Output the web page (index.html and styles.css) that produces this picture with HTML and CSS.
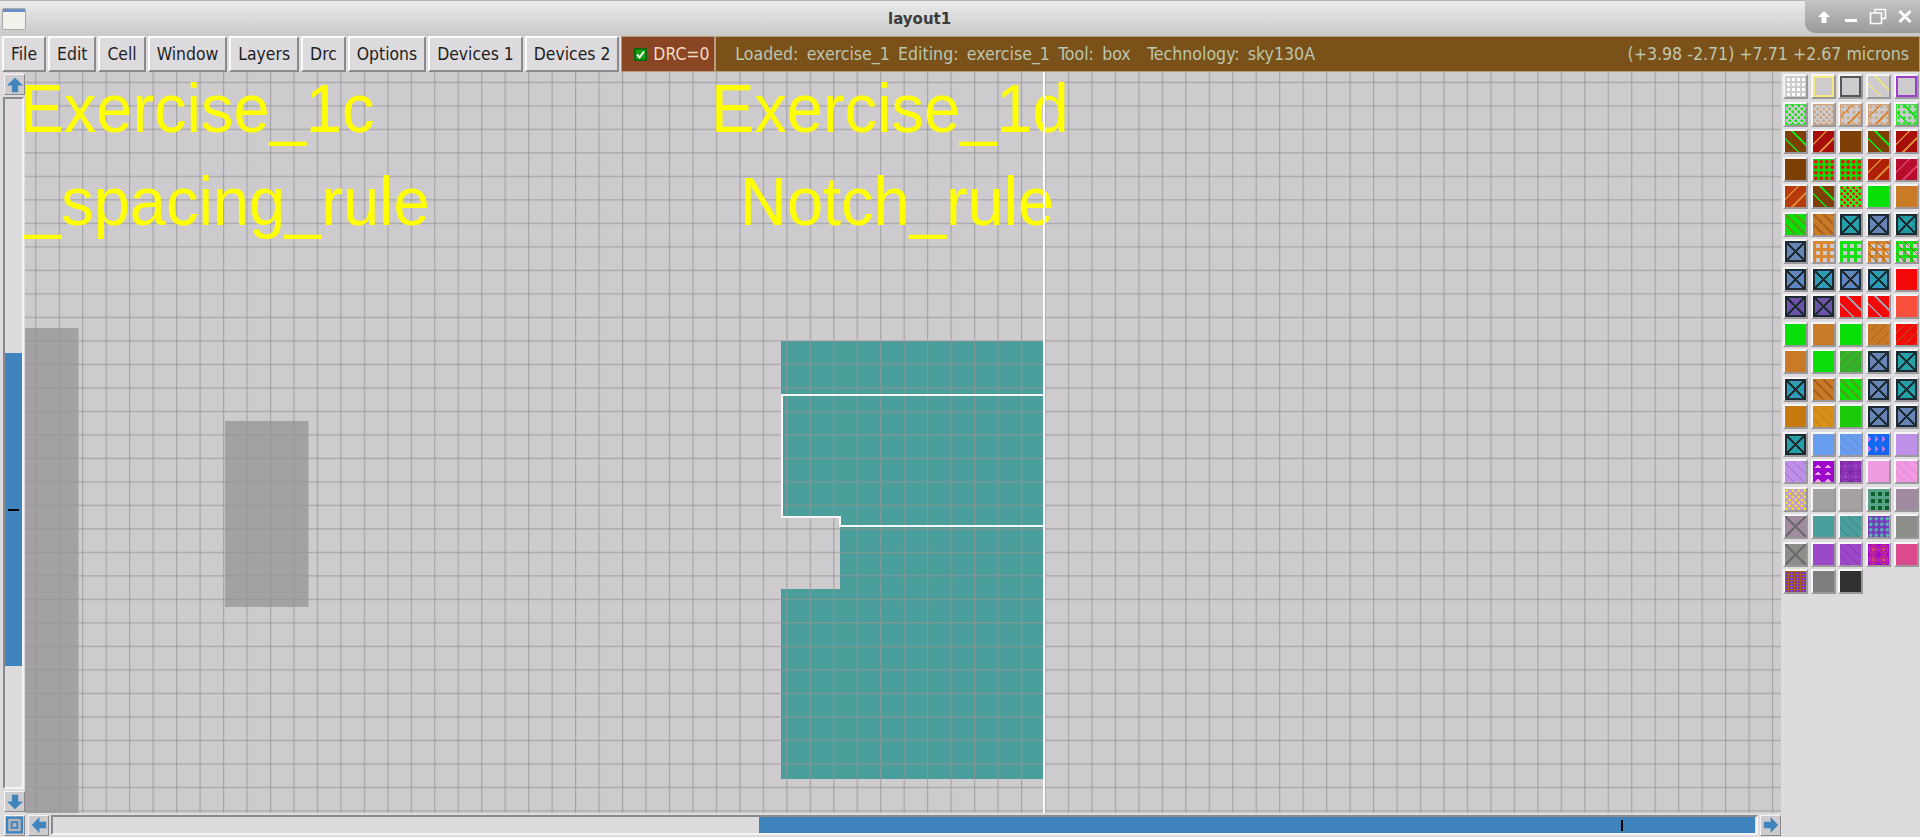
FILE: index.html
```html
<!DOCTYPE html>
<html lang="en">
<head>
    <meta charset="UTF-8">
    <title>layout1</title>
    <link rel="stylesheet" href="styles.css">
</head>
<body>
    <svg class="defs" width="0" height="0">
        <symbol id="arrow" viewBox="0 0 20 20"><path d="M10 2 L19 10.500 H13.500 V18 H6.500 V10.500 H1 Z"/></symbol>
    </svg>

    <header class="titlebar">
        <svg class="win-icon" width="24" height="22" viewBox="0 0 24 22">
            <rect x="0.500" y="0.500" width="23" height="21" rx="1.500" fill="#f2f2ec" stroke="#a8a8a8"/>
            <rect x="1" y="1" width="22" height="3" fill="#6a8fc4"/>
        </svg>
        <div class="title">layout1</div>
        <div class="win-buttons">
            <svg width="20" height="20" viewBox="0 0 20 20"><path class="wb-fill" d="M10 4 L16 10 H12.500 V16 H7.500 V10 H4 Z"/></svg>
            <svg width="20" height="20" viewBox="0 0 20 20"><rect class="wb-fill" x="4" y="12" width="12" height="3"/></svg>
            <svg width="20" height="20" viewBox="0 0 20 20"><path class="wb-line" d="M7 5 V2.500 H17.500 V11.500 H14 M2.500 6 H13.500 V16.500 H2.500 Z"/></svg>
            <svg width="20" height="20" viewBox="0 0 20 20"><path class="wb-x" d="M4.500 4 L15.500 15 M15.500 4 L4.500 15"/></svg>
        </div>
    </header>

    <nav class="toolbar">
        <button class="menu">File</button>
        <button class="menu">Edit</button>
        <button class="menu">Cell</button>
        <button class="menu">Window</button>
        <button class="menu">Layers</button>
        <button class="menu">Drc</button>
        <button class="menu">Options</button>
        <button class="menu">Devices 1</button>
        <button class="menu">Devices 2</button>
        <div class="drc">
            <svg width="13" height="13" viewBox="0 0 13 13">
                <rect width="13" height="13" fill="#0b5f0b"/>
                <rect x="1.500" y="1.500" width="10" height="10" fill="#12a012"/>
                <path d="M3 6.500 L5.500 9.500 L10 3.500" fill="none" stroke="#fff" stroke-width="2"/>
            </svg>
            <span>DRC=0</span>
        </div>
        <div class="status">
            <span class="status-left">Loaded: exercise_1 Editing: exercise_1 Tool: box&nbsp; Technology: sky130A</span>
            <span>(+3.98 -2.71) +7.71 +2.67 microns</span>
        </div>
    </nav>

    <div class="workspace">
        <div class="left">
            <div class="canvas-row">
                <div class="vscroll">
                    <button class="arrow-btn"><svg width="20" height="20"><use href="#arrow"/></svg></button>
                    <div class="vtrack">
                        <div class="vthumb"><b class="vtick"></b></div>
                    </div>
                    <button class="arrow-btn"><svg class="down" width="20" height="20"><use href="#arrow"/></svg></button>
                </div>

                <svg class="canvas" width="1756" height="741" viewBox="0 0 1756 741">
                    <defs>
                        <pattern id="grid" x="10.200" y="9.800" width="23.470" height="23.500" patternUnits="userSpaceOnUse">
                            <rect width="1.200" height="23.500"/>
                            <rect width="23.470" height="1.200"/>
                        </pattern>
                    </defs>
                    <rect class="bg" width="1756" height="741"/>
                    <rect class="paint-gray" x="0" y="256" width="53.500" height="485"/>
                    <rect class="paint-gray" x="200" y="349" width="83.500" height="186"/>
                    <path class="paint-teal" d="M756 269 H1019 V707 H756 V517 H815 V445.500 H756 Z"/>
                    <rect fill="url(#grid)" width="1756" height="741"/>
                    <text class="label" transform="translate(-4.500 60) scale(1 1.050)">Exercise_1c</text>
                    <text class="label" transform="translate(0 153) scale(1 1.050)">_spacing_rule</text>
                    <text class="label" transform="translate(686 60) scale(1 1.050)">Exercise_1d</text>
                    <text class="label" transform="translate(715 153) scale(1 1.050)">Notch_rule</text>
                    <path class="box" d="M1018 323 H757 V445 H815 V454 H1018"/>
                    <rect class="cursor" x="1018" y="0" width="2" height="741"/>
                </svg>
            </div>

            <div class="hscroll">
                <button class="arrow-btn zoom-btn">
                    <svg width="20" height="20" viewBox="0 0 20 20">
                        <rect width="18" height="18" x="1" y="1" fill="#3f84bd"/>
                        <rect width="13" height="13" x="3.500" y="3.500" fill="#b5b5ba"/>
                        <rect width="8" height="8" x="6" y="6" fill="#3f84bd"/>
                        <rect width="4" height="4" x="8" y="8" fill="#b5b5ba"/>
                    </svg>
                </button>
                <button class="arrow-btn"><svg class="left-arrow" width="20" height="20"><use href="#arrow"/></svg></button>
                <div class="htrack">
                    <div class="hthumb"><b class="htick"></b></div>
                </div>
                <button class="arrow-btn"><svg class="right-arrow" width="20" height="20"><use href="#arrow"/></svg></button>
            </div>
        </div>

        <aside class="palette">
            <i class="sw f-gray a-white squares"></i><i class="sw f-gray e-yellow"></i><i class="sw f-gray e-dark"></i><i class="sw f-gray a-yellow bdiag"></i><i class="sw f-gray e-purple"></i>
            <i class="sw f-gray a-green e-green dots"></i><i class="sw f-gray a-tan e-tan dots"></i><i class="sw f-gray a-orange e-tan dots-fdiag"></i><i class="sw f-gray a-orange e-tan dots-fdiag"></i><i class="sw f-gray a-green e-green dots-bdiag"></i>
            <i class="sw f-brown a-green bdiag"></i><i class="sw f-dred a-orange fdiag"></i><i class="sw f-brown"></i><i class="sw f-brown a-green bdiag"></i><i class="sw f-dred a-orange fdiag"></i>
            <i class="sw f-brown"></i><i class="sw f-green a-red dots-big"></i><i class="sw f-green a-red dots-big"></i><i class="sw f-rust a-orange fdiag"></i><i class="sw f-crimson a-rose fdiag"></i>
            <i class="sw f-rust2 a-orange fdiag"></i><i class="sw f-brown a-green bdiag"></i><i class="sw f-lime a-red dots"></i><i class="sw f-green"></i><i class="sw f-orange"></i>
            <i class="sw f-green a-olive dash"></i><i class="sw f-orange a-rustd dash"></i><i class="sw f-teal x"></i><i class="sw f-slate x"></i><i class="sw f-teal a-cyan x-dots"></i>
            <i class="sw f-slate x"></i><i class="sw f-gray a-orange hatch"></i><i class="sw f-gray a-green hatch"></i><i class="sw f-gray a-orange hatch-diag"></i><i class="sw f-gray a-green hatch-diag"></i>
            <i class="sw f-slate a-blue x-dots"></i><i class="sw f-teal a-blue x-dots"></i><i class="sw f-slate a-blue x-dots"></i><i class="sw f-teal a-blue x-dots"></i><i class="sw f-red"></i>
            <i class="sw f-violet x"></i><i class="sw f-violet x"></i><i class="sw f-red a-steel bdiag"></i><i class="sw f-red a-steel bdiag"></i><i class="sw f-salmon"></i>
            <i class="sw f-green"></i><i class="sw f-orange"></i><i class="sw f-green"></i><i class="sw f-orange a-rustd fine"></i><i class="sw f-red a-rustd fine"></i>
            <i class="sw f-orange"></i><i class="sw f-green"></i><i class="sw f-dgreen a-green fine"></i><i class="sw f-slate x"></i><i class="sw f-teal x"></i>
            <i class="sw f-teal a-blue x-dots"></i><i class="sw f-orange a-rustd dash"></i><i class="sw f-green a-olive dash"></i><i class="sw f-slate x"></i><i class="sw f-teal x"></i>
            <i class="sw f-ochre"></i><i class="sw f-gold a-ochre bfine"></i><i class="sw f-green2"></i><i class="sw f-slate x"></i><i class="sw f-slate x"></i>
            <i class="sw f-teal x"></i><i class="sw f-sky"></i><i class="sw f-sky a-skyd bfine"></i><i class="sw f-azure a-lilac tri-right"></i><i class="sw f-lilac"></i>
            <i class="sw f-lilac a-violet bfine"></i><i class="sw f-magenta a-pink tri-up"></i><i class="sw f-dpurple a-plum ring"></i><i class="sw f-pink"></i><i class="sw f-pink a-hot bfine"></i>
            <i class="sw f-lilacg a-yolk dots"></i><i class="sw f-stone"></i><i class="sw f-stone a-khaki bfine"></i><i class="sw f-forest a-seafoam hatch"></i><i class="sw f-mauve"></i>
            <i class="sw f-mauve x-soft"></i><i class="sw f-aqua"></i><i class="sw f-aqua a-aquad bfine"></i><i class="sw f-grape a-aqua dots-big"></i><i class="sw f-ash"></i>
            <i class="sw f-ash x-soft"></i><i class="sw f-amethyst"></i><i class="sw f-amethyst a-grape bfine"></i><i class="sw f-magenta a-rose ring"></i><i class="sw f-rosepink"></i>
            <i class="sw f-grape a-rustd hatch-fine"></i><i class="sw f-iron"></i><i class="sw f-coal"></i>
        </aside>
    </div>
</body>
</html>
```

FILE: styles.css
```css
* {
    box-sizing: border-box;
}
html, body {
    margin: 0;
    height: 837px;
    overflow: hidden;
}
body {
    display: flex;
    flex-direction: column;
    font-family: "DejaVu Sans Condensed", "DejaVu Sans", sans-serif;
    font-stretch: condensed;
    background-color: #dddbde;
}
.defs {
    position: absolute;
}

/* title bar */
.titlebar {
    height: 36px;
    display: flex;
    align-items: center;
    position: relative;
    padding-left: 2px;
    border-top: 1px solid #b4b4b4;
    background: linear-gradient(#ebebeb, #c9c9c9);
}
.title {
    position: absolute;
    left: 888px;
    top: 9px;
    font-family: "DejaVu Sans", sans-serif;
    font-stretch: normal;
    font-weight: bold;
    font-size: 15px;
    color: #3c3c3c;
}
.win-buttons {
    position: absolute;
    right: 0;
    top: -1px;
    width: 115px;
    height: 33px;
    display: flex;
    align-items: center;
    gap: 7px;
    padding-left: 9px;
    border-bottom-left-radius: 10px;
    background: linear-gradient(#c4c4c4, #9a9a9a);
}
.wb-fill {
    fill: #fff;
}
.wb-line {
    fill: none;
    stroke: #fff;
    stroke-width: 1.600;
}
.wb-x {
    fill: none;
    stroke: #fff;
    stroke-width: 3;
}

/* menu row */
.toolbar {
    height: 36px;
    display: flex;
    padding-left: 2px;
    background-color: #dddbde;
}
.menu {
    height: 36px;
    margin-right: 2px;
    padding: 0 7px;
    font: inherit;
    font-stretch: condensed;
    font-size: 17.400px;
    color: #1e1e1e;
    background-color: #dddbde;
    border: 2px solid;
    border-color: #fbfbfb #8b898c #8b898c #fbfbfb;
}
.drc {
    width: 94px;
    display: flex;
    align-items: center;
    gap: 6px;
    padding-left: 12px;
    font-size: 17.400px;
    color: #f3dcc6;
    background-color: #8a4522;
    border: 1px solid #b99a82;
}
.status {
    flex: 1;
    display: flex;
    align-items: center;
    justify-content: space-between;
    padding: 0 10px 0 19px;
    font-size: 17.600px;
    color: #bcc6b0;
    background-color: #7a5118;
    border: 1px solid #b3a081;
}
.status-left {
    word-spacing: 3.200px;
}

/* main area */
.workspace {
    flex: 1;
    display: flex;
}
.left {
    width: 1781px;
    display: flex;
    flex-direction: column;
}
.canvas-row {
    height: 741px;
    display: flex;
}
.vscroll {
    width: 25px;
    display: flex;
    flex-direction: column;
    align-items: flex-start;
    padding: 2px 0 1px 4px;
}
.arrow-btn {
    width: 21px;
    height: 21px;
    flex: none;
    padding: 0;
    display: flex;
    align-items: center;
    justify-content: center;
    fill: #3f84bd;
    background-color: #cdcbce;
    border: 1px solid;
    border-color: #f4f3f5 #8b898c #8b898c #f4f3f5;
}
.arrow-btn svg {
    width: 18px;
    height: 18px;
}
.down {
    transform: rotate(180deg);
}
.left-arrow {
    transform: rotate(-90deg);
}
.right-arrow {
    transform: rotate(90deg);
}
.vtrack {
    flex: 1;
    width: 21px;
    margin: 2px 0;
    margin-left: -1px;
    padding-top: 254px;
    padding-bottom: 121px;
    background-color: #dddbde;
    border: 2px solid;
    border-color: #8b898c #f4f3f5 #f4f3f5 #8b898c;
    display: flex;
}
.vthumb {
    flex: 1;
    display: flex;
    align-items: center;
    justify-content: center;
    background-color: #3f84bd;
}
.vtick {
    width: 11px;
    height: 2px;
    background-color: #000;
}
.canvas {
    display: block;
    overflow: visible;
}
.bg {
    fill: #cdcbce;
}
#grid rect {
    fill: rgba(150, 148, 150, 0.72);
}
.paint-gray {
    fill: #a3a1a3;
}
.paint-teal {
    fill: #4a9e9b;
}
.label {
    font-family: "Liberation Sans", Arial, sans-serif;
    font-stretch: normal;
    font-size: 65px;
    fill: #ffff00;
}
.box {
    fill: none;
    stroke: #f6f8f8;
    stroke-width: 2;
}
.cursor {
    fill: #fbfbfb;
}

/* bottom scroll bar */
.hscroll {
    flex: 1;
    display: flex;
    align-items: center;
    padding-left: 4px;
    gap: 2px;
}
.zoom-btn {
    margin-right: 1px;
}
.zoom-btn svg {
    width: 20px;
    height: 20px;
}
.htrack {
    width: 1708px;
    height: 20px;
    padding-left: 706px;
    padding-right: 1px;
    background-color: #dddbde;
    border: 2px solid;
    border-color: #8b898c #f4f3f5 #f4f3f5 #8b898c;
    display: flex;
}
.hthumb {
    flex: 1;
    display: flex;
    align-items: center;
    padding-left: 862px;
    background-color: #3f84bd;
}
.htick {
    width: 2px;
    height: 11px;
    background-color: #000;
}

/* layer palette */
.palette {
    width: 139px;
    display: grid;
    grid-template-columns: repeat(5, 27.700px);
    grid-auto-rows: 27.500px;
    align-content: start;
    padding: 2px 0 0 2px;
    background-color: #dddbde;
}
.sw {
    display: block;
    width: 25px;
    height: 25px;
    background-color: var(--c);
    border: 2px solid;
    border-color: #f6f5f7 #9a989b #9a989b #f6f5f7;
    box-shadow: inset 0 0 0 1px var(--e, transparent);
}

/* fills */
.f-gray { --c: #cdcbce; }
.f-brown { --c: #7e3f07; }
.f-dred { --c: #a80e08; }
.f-green { --c: #0adf0a; }
.f-green2 { --c: #1ccb08; }
.f-dgreen { --c: #3aa92e; }
.f-lime { --c: #3ae820; }
.f-rust { --c: #b01f08; }
.f-rust2 { --c: #b83a0c; }
.f-crimson { --c: #b80c2c; }
.f-orange { --c: #c97a26; }
.f-ochre { --c: #c5790f; }
.f-gold { --c: #d9901a; }
.f-teal { --c: #26a0a8; }
.f-slate { --c: #6884b4; }
.f-violet { --c: #6c52a8; }
.f-red { --c: #f40808; }
.f-salmon { --c: #f9503e; }
.f-sky { --c: #699df0; }
.f-azure { --c: #1468f0; }
.f-lilac { --c: #bf90e8; }
.f-magenta { --c: #9c08cc; }
.f-dpurple { --c: #7a28a8; }
.f-pink { --c: #f09ae2; }
.f-lilacg { --c: #c09cd0; }
.f-stone { --c: #a3a1a3; }
.f-forest { --c: #0f5f28; }
.f-mauve { --c: #a08aa0; }
.f-aqua { --c: #4a9e9b; }
.f-grape { --c: #7a35c0; }
.f-ash { --c: #8b8d89; }
.f-amethyst { --c: #9c48c8; }
.f-rosepink { --c: #dc4a8e; }
.f-iron { --c: #7e7e80; }
.f-coal { --c: #2f322f; }

/* pattern colours */
.a-white { --a: #ffffff; }
.a-yellow { --a: #ece48c; }
.a-green { --a: #14e014; }
.a-tan { --a: #cfa27c; }
.a-orange { --a: #d98630; }
.a-red { --a: #ee1010; }
.a-rose { --a: #d8406a; }
.a-olive { --a: #5a9a18; }
.a-rustd { --a: #a8601c; }
.a-cyan { --a: #1a8a98; }
.a-blue { --a: #4a8ce0; }
.a-steel { --a: #a89aa8; }
.a-ochre { --a: #c07a14; }
.a-skyd { --a: #5a88cc; }
.a-lilac { --a: #b47cf0; }
.a-violet { --a: #a06cd0; }
.a-pink { --a: #f0a4ec; }
.a-plum { --a: #a040c0; }
.a-hot { --a: #e878d0; }
.a-yolk { --a: #f2e030; }
.a-khaki { --a: #b09a80; }
.a-seafoam { --a: #58a088; }
.a-aqua { --a: #4fb8a8; }
.a-aquad { --a: #3a8484; }
.a-grape { --a: #7e38b0; }

/* outlines */
.e-yellow { --e: #f4ea80; box-shadow: inset 0 0 0 2px var(--e); }
.e-dark { --e: #565658; box-shadow: inset 0 0 0 2px var(--e); }
.e-purple { --e: #9a40c8; box-shadow: inset 0 0 0 2px var(--e); }
.e-green { --e: #40dc40; }
.e-tan { --e: #cfa27c; }

/* stipples */
.squares {
    background-image:
        linear-gradient(var(--c) 2px, transparent 2px),
        linear-gradient(90deg, var(--c) 2px, var(--a) 2px);
    background-size: 5px 5px;
}
.dots {
    background-image:
        radial-gradient(circle at 1.750px 1.750px, var(--a) 1.200px, transparent 1.500px),
        radial-gradient(circle at 4.750px 4.750px, var(--a) 1.200px, transparent 1.500px);
    background-size: 6px 6px;
}
.dots-big {
    background-image: radial-gradient(var(--a) 1.700px, transparent 2px);
    background-size: 5.500px 5.500px;
}
.fdiag {
    background-image: repeating-linear-gradient(135deg, transparent 0 8.500px, var(--a) 8.500px 10.500px);
}
.bdiag {
    background-image: repeating-linear-gradient(45deg, transparent 0 8.500px, var(--a) 8.500px 10.500px);
}
.fine {
    background-image: repeating-linear-gradient(135deg, transparent 0 6px, var(--a) 6px 7px);
}
.bfine {
    background-image: repeating-linear-gradient(45deg, transparent 0 6px, var(--a) 6px 7px);
}
.dots-fdiag {
    background-image:
        repeating-linear-gradient(135deg, transparent 0 8.500px, var(--a) 8.500px 10.500px),
        radial-gradient(#cfa27c 1.300px, transparent 1.600px);
    background-size: auto, 5.500px 5.500px;
}
.dots-bdiag {
    background-image:
        repeating-linear-gradient(45deg, transparent 0 8.500px, var(--a) 8.500px 10.500px),
        radial-gradient(var(--a) 1.300px, transparent 1.600px);
    background-size: auto, 5.500px 5.500px;
}
.dash {
    background-image: linear-gradient(45deg, transparent 44%, var(--a) 44% 56%, transparent 56%);
    background-size: 10px 10px;
}
.hatch {
    background-image:
        linear-gradient(var(--a) 3px, transparent 3px),
        linear-gradient(90deg, var(--a) 3px, transparent 3px);
    background-size: 7px 7px;
}
.hatch-diag {
    background-image:
        repeating-linear-gradient(45deg, transparent 0 6px, #8a5a20 6px 7px),
        linear-gradient(var(--a) 3px, transparent 3px),
        linear-gradient(90deg, var(--a) 3px, transparent 3px);
    background-size: auto, 7px 7px, 7px 7px;
}
.hatch-fine {
    background-image:
        linear-gradient(var(--a) 1px, transparent 1px),
        linear-gradient(90deg, var(--a) 1px, transparent 1px);
    background-size: 3px 3px;
}
.tri-up {
    background-image: conic-gradient(from 135deg, var(--a) 90deg, transparent 0);
    background-size: 10px 7px;
}
.tri-right {
    background-image: conic-gradient(from 225deg, var(--a) 90deg, transparent 0);
    background-size: 7px 10px;
}
.ring {
    background-image: radial-gradient(circle, var(--a) 0 2px, transparent 2.500px 3.500px, var(--a) 3.500px 4.500px, transparent 5px);
    background-size: 10.500px 10.500px;
}
.x,
.x-dots {
    --e: #1c2a32;
    box-shadow: inset 0 0 0 2px var(--e);
    background-image:
        linear-gradient(45deg, transparent 47%, #1c2a32 47% 53%, transparent 53%),
        linear-gradient(135deg, transparent 47%, #1c2a32 47% 53%, transparent 53%);
}
.x-dots {
    background-image:
        linear-gradient(45deg, transparent 47%, #1c2a32 47% 53%, transparent 53%),
        linear-gradient(135deg, transparent 47%, #1c2a32 47% 53%, transparent 53%),
        radial-gradient(var(--a) 1.200px, transparent 1.500px);
    background-size: auto, auto, 5px 5px;
}
.x-soft {
    background-image:
        linear-gradient(45deg, transparent 47%, #6a6a6c 47% 53%, transparent 53%),
        linear-gradient(135deg, transparent 47%, #6a6a6c 47% 53%, transparent 53%);
}
```
